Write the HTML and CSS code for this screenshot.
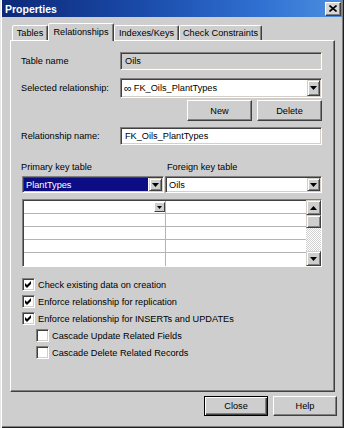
FILE: index.html
```html
<!DOCTYPE html>
<html>
<head>
<meta charset="utf-8">
<title>Properties</title>
<link rel="stylesheet" href="styles.css">
</head>
<body>
<div class="window">
  <div class="titlebar">
    <span class="title">Properties</span>
    <span class="close"><svg width="8" height="7" viewBox="0 0 8 7"><path d="M0.5 0.5 L7.5 6.5 M7.5 0.5 L0.5 6.5" stroke="#000" stroke-width="1.6"/></svg></span>
  </div>
  <div class="tabs">
    <div class="tab t1">Tables</div>
    <div class="tab t2 active">Relationships</div>
    <div class="tab t3">Indexes/Keys</div>
    <div class="tab t4">Check Constraints</div>
  </div>
  <div class="panel">
    <div class="row r1">
      <span class="lbl">Table name</span>
      <div class="field disabled">Oils</div>
    </div>
    <div class="row r2">
      <span class="lbl">Selected relationship:</span>
      <div class="combo"><span class="val"><span class="rel">&#8734;</span> FK_Oils_PlantTypes</span><span class="dd"><svg width="7" height="4" viewBox="0 0 7 4"><polygon points="0,0 7,0 3.5,4" fill="#000"/></svg></span></div>
    </div>
    <div class="btnrow">
      <button class="btn">New</button>
      <button class="btn">Delete</button>
    </div>
    <div class="row r4">
      <span class="lbl">Relationship name:</span>
      <div class="field">FK_Oils_PlantTypes</div>
    </div>
    <div class="keys">
      <div class="keycol">
        <div class="klbl">Primary key table</div>
        <div class="combo kc1"><span class="val sel">PlantTypes</span><span class="dd"><svg width="7" height="4" viewBox="0 0 7 4"><polygon points="0,0 7,0 3.5,4" fill="#000"/></svg></span></div>
      </div>
      <div class="keycol">
        <div class="klbl k2">Foreign key table</div>
        <div class="combo"><span class="val">Oils</span><span class="dd"><svg width="7" height="4" viewBox="0 0 7 4"><polygon points="0,0 7,0 3.5,4" fill="#000"/></svg></span></div>
      </div>
    </div>
    <div class="grid">
      <div class="cells">
        <div class="cell c1"><span class="cdd"><svg width="5" height="3" viewBox="0 0 5 3"><polygon points="0,0 5,0 2.5,3" fill="#000"/></svg></span></div><div class="cell"></div>
        <div class="cell c1"></div><div class="cell"></div>
        <div class="cell c1"></div><div class="cell"></div>
        <div class="cell c1"></div><div class="cell"></div>
        <div class="cell c1 last"></div><div class="cell last"></div>
      </div>
      <div class="scroll">
        <span class="sbtn"><svg width="7" height="4" viewBox="0 0 7 4"><polygon points="0,4 7,4 3.5,0" fill="#000"/></svg></span>
        <span class="thumb"></span>
        <span class="track"></span>
        <span class="sbtn"><svg width="7" height="4" viewBox="0 0 7 4"><polygon points="0,0 7,0 3.5,4" fill="#000"/></svg></span>
      </div>
    </div>
    <div class="checks">
      <div class="chk"><span class="box"><svg width="7" height="7" viewBox="0 0 7 7"><polygon points="0,2 2,4 6,0 6,3 2,7 0,5" fill="#000"/></svg></span><span>Check existing data on creation</span></div>
      <div class="chk"><span class="box"><svg width="7" height="7" viewBox="0 0 7 7"><polygon points="0,2 2,4 6,0 6,3 2,7 0,5" fill="#000"/></svg></span><span>Enforce relationship for replication</span></div>
      <div class="chk"><span class="box"><svg width="7" height="7" viewBox="0 0 7 7"><polygon points="0,2 2,4 6,0 6,3 2,7 0,5" fill="#000"/></svg></span><span>Enforce relationship for INSERTs and UPDATEs</span></div>
      <div class="chk sub"><span class="box"></span><span>Cascade Update Related Fields</span></div>
      <div class="chk sub"><span class="box"></span><span>Cascade Delete Related Records</span></div>
    </div>
  </div>
  <div class="footer">
    <button class="btn fbtn default">Close</button>
    <button class="btn fbtn">Help</button>
  </div>
</div>
</body>
</html>
```
FILE: styles.css
```css
* { box-sizing: border-box; margin: 0; padding: 0; }
body {
  margin: 0;
  background: #cecece;
  font-family: "Liberation Sans", Arial, sans-serif;
  font-size: 9.2px;
  color: #000;
}
.window {
  width: 344px;
  height: 428px;
  background: #cecece;
  display: flex;
  flex-direction: column;
  padding: 0 2px 3px 2px;
  box-shadow: inset 1px 0 #e6e6e6, inset 2px 0 #fff, inset -1px -1px #1e1e1e, inset -2px -2px #808080;
}
.titlebar {
  height: 17px;
  display: flex;
  align-items: center;
  justify-content: space-between;
  padding: 0 1px 0 3px;
  background: linear-gradient(90deg, #0c2878 0%, #1a4aa8 40%, #2f6fd0 75%, #4b8fe0 100%);
}
.title {
  color: #fff;
  font-weight: bold;
  font-size: 10.5px;
}
.close {
  width: 16px;
  height: 14px;
  background: #d6d6d6;
  border: 1px solid;
  border-color: #fff #404040 #404040 #fff;
  box-shadow: inset -1px -1px #808080;
  display: flex;
  align-items: center;
  justify-content: center;
}
.tabs {
  display: flex;
  align-items: flex-end;
  height: 17px;
  margin-top: 6px;
  padding-left: 10px;
  position: relative;
  z-index: 1;
}
.tab {
  height: 15px;
  border: 1px solid;
  border-bottom: 0;
  border-color: #fff #404040 transparent #fff;
  box-shadow: inset -1px 0 #808080;
  border-radius: 2px 2px 0 0;
  display: flex;
  align-items: center;
  justify-content: center;
  background: #cecece;
  white-space: nowrap;
}
.tab.active {
  height: 18px;
  margin-bottom: -1px;
  padding-bottom: 2px;
}
.t1 { width: 36px; }
.t2 { width: 66px; }
.t3 { width: 65px; }
.t4 { width: 83px; }
.panel {
  margin-left: 8px;
  width: 325px;
  height: 352px;
  border: 1px solid;
  border-color: #fff #404040 #404040 #fff;
  box-shadow: inset -1px -1px #808080;
  padding: 0 12px 0 10px;
  display: flex;
  flex-direction: column;
}
.row {
  display: flex;
  align-items: center;
}
.lbl {
  width: 99px;
  flex: none;
  white-space: nowrap;
}
.r1 { margin-top: 11px; height: 18px; }
.r2 { margin-top: 8px; height: 20px; }
.r4 { margin-top: 6px; height: 18px; }
.field, .combo {
  flex: 1;
  height: 100%;
  background: #fff;
  border: 1px solid;
  border-color: #808080 #fff #fff #808080;
  box-shadow: inset 1px 1px #404040, inset -1px -1px #d4d0c8;
  display: flex;
  align-items: center;
  white-space: nowrap;
}
.field { padding-left: 4px; }
.field.disabled { background: #cecece; }
.combo { padding: 1px; }
.val {
  flex: 1;
  height: 100%;
  display: flex;
  align-items: center;
  padding-left: 2px;
}
.rel { font-size: 11px; margin-right: 2px; }
.val.sel {
  background: #0c0c84;
  color: #fff;
  margin-right: 1px;
}
.dd, .sbtn {
  flex: none;
  width: 13px;
  height: 100%;
  background: #cecece;
  border: 1px solid;
  border-color: #d4d0c8 #404040 #404040 #d4d0c8;
  box-shadow: inset 1px 1px #fff, inset -1px -1px #808080;
  display: flex;
  align-items: center;
  justify-content: center;
}
.btnrow {
  margin-top: 2px;
  height: 21px;
  display: flex;
  justify-content: flex-end;
  gap: 5px;
}
.btn {
  width: 65px;
  height: 21px;
  background: #cecece;
  border: 1px solid;
  border-color: #fff #404040 #404040 #fff;
  box-shadow: inset -1px -1px #808080;
  display: flex;
  align-items: center;
  justify-content: center;
  font: inherit;
  color: #000;
}
.keys {
  margin-top: 16px;
  display: grid;
  grid-template-columns: 143px 1fr;
  column-gap: 1px;
}
.klbl {
  height: 12px;
  line-height: 12px;
  white-space: nowrap;
}
.klbl.k2 { padding-left: 2px; }
.keys .combo {
  margin-top: 3px;
  height: 17px;
}
.kc1 { margin-left: 1px; }
.grid {
  margin-top: 6px;
  margin-left: 1px;
  height: 68px;
  display: flex;
  background: #fff;
  border: 1px solid;
  border-color: #808080 #fff #fff #808080;
  box-shadow: inset 1px 1px #404040;
}
.cells {
  flex: 1;
  display: grid;
  grid-template-columns: 142px 1fr;
  grid-auto-rows: 13px;
  padding: 1px 0 0 1px;
}
.cell {
  border-bottom: 1px solid #b4b4b4;
  display: flex;
  justify-content: flex-end;
  align-items: flex-start;
}
.cell.c1 { border-right: 1px solid #b4b4b4; }
.cell.last { border-bottom: 0; }
.cdd {
  width: 11px;
  height: 10px;
  margin-top: 1px;
  background: #cecece;
  border: 1px solid;
  border-color: #fff #404040 #404040 #fff;
  display: flex;
  align-items: center;
  justify-content: center;
}
.scroll {
  width: 15px;
  flex: none;
  display: flex;
  flex-direction: column;
}
.scroll .sbtn { width: 15px; height: 15px; }
.thumb {
  height: 13px;
  background: #cecece;
  border: 1px solid;
  border-color: #d4d0c8 #404040 #404040 #d4d0c8;
  box-shadow: inset 1px 1px #fff, inset -1px -1px #808080;
}
.track {
  flex: 1;
  background: repeating-conic-gradient(#fff 0 25%, #d0d0d0 0 50%) 0 0 / 2px 2px;
}
.checks {
  margin-top: 9px;
}
.chk {
  height: 17px;
  display: flex;
  align-items: center;
  gap: 3px;
  padding-left: 1px;
  white-space: nowrap;
}
.chk.sub { padding-left: 15px; }
.box {
  width: 13px;
  height: 13px;
  flex: none;
  background: #fff;
  border: 1px solid;
  border-color: #808080 #fff #fff #808080;
  box-shadow: inset 1px 1px #404040, inset -1px -1px #d4d0c8;
  display: flex;
  align-items: center;
  justify-content: center;
}
.footer {
  margin-top: 4px;
  display: flex;
  justify-content: flex-end;
  gap: 5px;
  padding-right: 5px;
}
.fbtn { width: 64px; height: 20px; }
.btn.default {
  border-color: #000;
  box-shadow: inset 1px 1px #fff, inset -1px -1px #404040, inset -2px -2px #808080;
}
```
